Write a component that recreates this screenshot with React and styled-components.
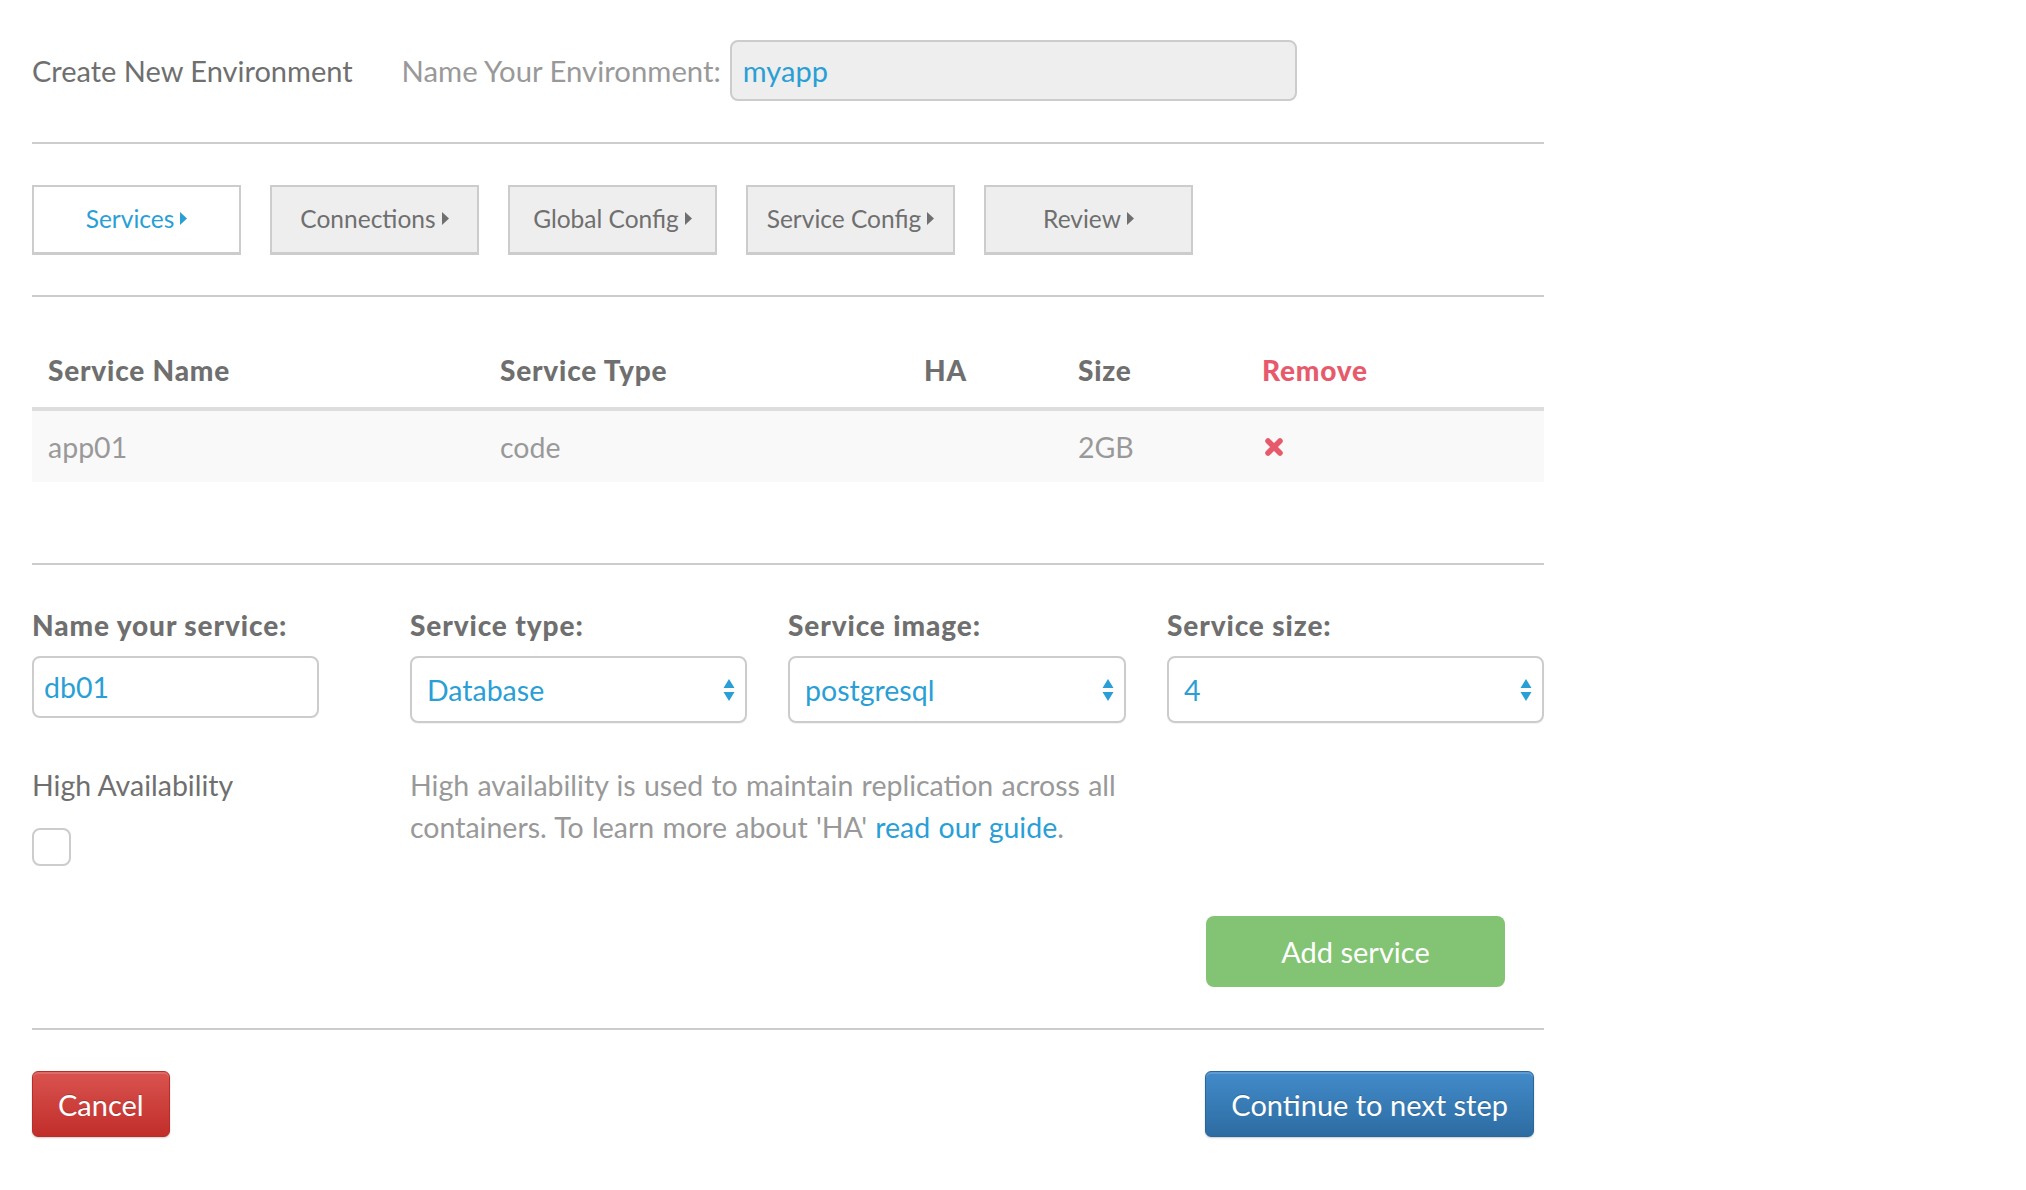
import React from "react";
import styled, { createGlobalStyle } from "styled-components";

const Global = createGlobalStyle`
  html, body { margin: 0; padding: 0; background: #fff; }
  body { font-family: Lato, "Open Sans", sans-serif; color: #777; }
  * { box-sizing: border-box; }
`;

const Page = styled.div`
  width: 1544px;
  padding: 40px 0 40px 32px;
`;

const Divider = styled.hr`
  margin: ${(p) => p.$m || "41px 0"};
  border: 0;
  border-top: 2px solid #ccc;
  height: 0;
`;

const Header = styled.div`
  display: flex;
  align-items: center;
  height: 61px;
`;

const Title = styled.div`
  font-size: 29px;
  color: #6f6f6f;
  margin-right: 49px;
`;

const EnvLabel = styled.label`
  font-size: 29.3px;
  color: #999;
  margin-right: 9px;
`;

const EnvInput = styled.div`
  width: 567px;
  height: 61px;
  background: #eee;
  border: 2px solid #ccc;
  border-radius: 8px;
  display: flex;
  align-items: center;
  padding-left: 11px;
  font-size: 29px;
  color: #2a9fd6;
`;

const Tabs = styled.div`
  display: flex;
  gap: 29px;
`;

const Tab = styled.div`
  width: 209px;
  height: 70px;
  border: 2px solid #ccc;
  border-bottom-width: 3px;
  background: ${(p) => (p.$active ? "#fff" : "#eee")};
  color: ${(p) => (p.$active ? "#2a9fd6" : "#6f6f6f")};
  display: flex;
  align-items: center;
  justify-content: center;
  gap: 6px;
  font-size: 24.5px;
  padding-bottom: 3px;
`;

const Caret = ({ color }) => (
  <svg width="7" height="13" viewBox="0 0 7 13">
    <path d="M0 0 L7 6.5 L0 13 Z" fill={color} />
  </svg>
);

const Table = styled.div`
  width: 1512px;
`;

const Row = styled.div`
  display: grid;
  grid-template-columns: 452px 424px 154px 184px 1fr;
  align-items: center;
  height: ${(p) => (p.$head ? "114px" : "71px")};
  padding-top: ${(p) => (p.$head ? "36px" : "0")};
  background: ${(p) => (p.$head ? "transparent" : "#f9f9f9")};
  border-bottom: ${(p) => (p.$head ? "4px solid #ddd" : "0")};
`;

const HeadCell = styled.div`
  padding-left: 16px;
  font-size: 28px;
  letter-spacing: 0.8px;
  font-weight: 900;
  color: ${(p) => (p.$danger ? "#e75a6b" : "#6f6f6f")};
`;

const Cell = styled.div`
  padding-left: 16px;
  font-size: 28.5px;
  color: #999;
  display: flex;
  align-items: center;
`;

const RemoveIcon = () => (
  <svg width="18" height="18" viewBox="0 0 18 18" style={{ marginLeft: 3 }}>
    <path d="M3 3 L15 15 M15 3 L3 15" stroke="#e75a6b" strokeWidth="5.5" strokeLinecap="round" />
  </svg>
);

const FormGrid = styled.div`
  display: grid;
  grid-template-columns: 337px 337px 338px 1fr;
  column-gap: 41px;
  width: 1512px;
`;

const Field = styled.div`
  display: flex;
  flex-direction: column;
`;

const FieldLabel = styled.div`
  font-size: 28px;
  letter-spacing: 0.9px;
  font-weight: 900;
  color: #6f6f6f;
  height: 32px;
  line-height: 32px;
  margin-bottom: 15px;
`;

const TextInput = styled.div`
  width: 287px;
  height: 62px;
  border: 2px solid #ccc;
  border-radius: 8px;
  display: flex;
  align-items: center;
  padding-left: 10px;
  font-size: 28.5px;
  color: #2a9fd6;
`;

const Select = styled.div`
  height: 67px;
  border: 2px solid #ccc;
  border-radius: 8px;
  display: flex;
  align-items: center;
  justify-content: space-between;
  padding: 0 10px 0 15px;
  font-size: 28.5px;
  color: #2a9fd6;
  box-shadow: 0 1px 1px rgba(0, 0, 0, 0.05);
`;

const Arrows = () => (
  <svg width="12" height="24" viewBox="0 0 12 24">
    <path d="M6 1 L11.5 10 L0.5 10 Z M6 23 L11.5 14 L0.5 14 Z" fill="#2a9fd6" />
  </svg>
);

const HARow = styled.div`
  display: grid;
  grid-template-columns: 337px 716px 1fr;
  column-gap: 41px;
  margin-top: 41px;
  width: 1512px;
`;

const PlainLabel = styled.div`
  font-size: 28.5px;
  color: #6f6f6f;
  line-height: 42px;
`;

const Checkbox = styled.div`
  width: 39px;
  height: 38px;
  border: 2px solid #ccc;
  border-radius: 8px;
  margin-top: 22px;
`;

const Help = styled.p`
  margin: 0;
  font-size: 28.5px;
  word-spacing: 1px;
  line-height: 42px;
  color: #999;
`;

const Link = styled.a`
  color: #2a9fd6;
  text-decoration: none;
`;

const AddRow = styled.div`
  display: grid;
  grid-template-columns: 337px 337px 338px 1fr;
  column-gap: 41px;
  width: 1512px;
  margin-top: 50px;
`;

const AddButton = styled.button`
  grid-column: 4;
  justify-self: center;
  width: 299px;
  height: 71px;
  border: 0;
  border-radius: 8px;
  background: #82c473;
  color: #fff;
  font-family: inherit;
  font-size: 29px;
`;

const Footer = styled.div`
  display: flex;
  justify-content: space-between;
  width: 1502px;
`;

const ActionButton = styled.button`
  height: 66px;
  padding: 0 25px;
  border-radius: 6px;
  font-family: inherit;
  font-size: 29px;
  color: #fff;
  text-shadow: 0 -1px 0 rgba(0, 0, 0, 0.2);
  border: 1px solid ${(p) => (p.$variant === "danger" ? "#b92c28" : "#2b669a")};
  background: ${(p) =>
    p.$variant === "danger"
      ? "linear-gradient(to bottom, #d9534f 0%, #c12e2a 100%)"
      : "linear-gradient(to bottom, #428bca 0%, #2d6ca2 100%)"};
  box-shadow: inset 0 2px 0 rgba(255, 255, 255, 0.15), 0 1px 2px rgba(0, 0, 0, 0.2);
`;

export default function App() {
  const tabs = ["Services", "Connections", "Global Config", "Service Config", "Review"];
  return (
    <>
      <Global />
      <Page>
        <Header>
          <Title>Create New Environment</Title>
          <EnvLabel>Name Your Environment:</EnvLabel>
          <EnvInput>myapp</EnvInput>
        </Header>
        <Divider />
        <Tabs>
          {tabs.map((t, i) => (
            <Tab key={t} $active={i === 0}>
              {t}
              <Caret color={i === 0 ? "#2a9fd6" : "#6f6f6f"} />
            </Tab>
          ))}
        </Tabs>
        <Divider $m="40px 0 0" />
        <Table>
          <Row $head>
            <HeadCell>Service Name</HeadCell>
            <HeadCell>Service Type</HeadCell>
            <HeadCell>HA</HeadCell>
            <HeadCell>Size</HeadCell>
            <HeadCell $danger>Remove</HeadCell>
          </Row>
          <Row>
            <Cell>app01</Cell>
            <Cell>code</Cell>
            <Cell></Cell>
            <Cell>2GB</Cell>
            <Cell>
              <RemoveIcon />
            </Cell>
          </Row>
        </Table>
        <Divider $m="81px 0 44px" />
        <FormGrid>
          <Field>
            <FieldLabel>Name your service:</FieldLabel>
            <TextInput>db01</TextInput>
          </Field>
          <Field>
            <FieldLabel>Service type:</FieldLabel>
            <Select>
              Database
              <Arrows />
            </Select>
          </Field>
          <Field>
            <FieldLabel>Service image:</FieldLabel>
            <Select>
              postgresql
              <Arrows />
            </Select>
          </Field>
          <Field>
            <FieldLabel>Service size:</FieldLabel>
            <Select>
              4
              <Arrows />
            </Select>
          </Field>
        </FormGrid>
        <HARow>
          <div>
            <PlainLabel>High Availability</PlainLabel>
            <Checkbox />
          </div>
          <Help>
            High availability is used to maintain replication across all containers. To learn more
            about 'HA' <Link href="#">read our guide</Link>.
          </Help>
        </HARow>
        <AddRow>
          <AddButton>Add service</AddButton>
        </AddRow>
        <Divider $m="41px 0" />
        <Footer>
          <ActionButton $variant="danger">Cancel</ActionButton>
          <ActionButton>Continue to next step</ActionButton>
        </Footer>
      </Page>
    </>
  );
}
